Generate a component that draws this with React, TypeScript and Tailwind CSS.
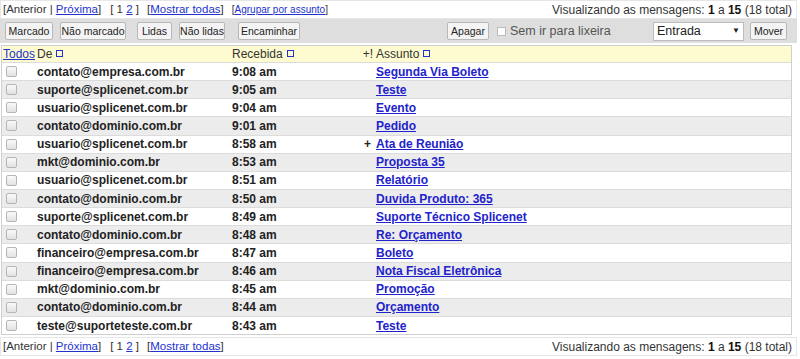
import React from 'react';

const rows = [
  { de: 'contato@empresa.com.br', hora: '9:08 am', assunto: 'Segunda Via Boleto' },
  { de: 'suporte@splicenet.com.br', hora: '9:05 am', assunto: 'Teste' },
  { de: 'usuario@splicenet.com.br', hora: '9:04 am', assunto: 'Evento' },
  { de: 'contato@dominio.com.br', hora: '9:01 am', assunto: 'Pedido' },
  { de: 'usuario@splicenet.com.br', hora: '8:58 am', assunto: 'Ata de Reunião', flag: '+' },
  { de: 'mkt@dominio.com.br', hora: '8:53 am', assunto: 'Proposta 35' },
  { de: 'usuario@splicenet.com.br', hora: '8:51 am', assunto: 'Relatório' },
  { de: 'contato@dominio.com.br', hora: '8:50 am', assunto: 'Duvida Produto: 365' },
  { de: 'suporte@splicenet.com.br', hora: '8:49 am', assunto: 'Suporte Técnico Splicenet' },
  { de: 'contato@dominio.com.br', hora: '8:48 am', assunto: 'Re: Orçamento' },
  { de: 'financeiro@empresa.com.br', hora: '8:47 am', assunto: 'Boleto' },
  { de: 'financeiro@empresa.com.br', hora: '8:46 am', assunto: 'Nota Fiscal Eletrônica' },
  { de: 'mkt@dominio.com.br', hora: '8:45 am', assunto: 'Promoção' },
  { de: 'contato@dominio.com.br', hora: '8:44 am', assunto: 'Orçamento' },
  { de: 'teste@suporteteste.com.br', hora: '8:43 am', assunto: 'Teste' },
];

// quadradinho azul de ordenação
function SortIcon() {
  return <span className="inline-block w-[7px] h-[7px] border border-[#2233cc] ml-[4px] align-middle relative top-[-1px]" />;
}

function Nav({ grupo }: { grupo?: boolean }) {
  return (
    <div className="w-[797px] h-[19px] border border-[#e6e6e6] flex items-center justify-between px-[2px] text-[12px] text-[#333]">
      <div className="flex items-center whitespace-nowrap text-[11.5px]">
        <span>[Anterior | <a className="text-[#2233cc] underline">Próxima</a>]</span>
        <span className="ml-[9px]">[ 1 <a className="text-[#2233cc] underline">2</a> ]</span>
        <span className="ml-[8px]">[<a className="text-[#2233cc] underline">Mostrar todas</a>]</span>
        {grupo && (
          <span className="ml-[8px] text-[10px]">[<a className="text-[#2233cc] underline">Agrupar por assunto</a>]</span>
        )}
      </div>
      <div className="whitespace-nowrap pr-[2px]">
        Visualizando as mensagens: <b className="text-[#111]">1</b> a <b className="text-[#111]">15</b> (18 total)
      </div>
    </div>
  );
}

function Btn({ children, className = '' }: { children: React.ReactNode; className?: string }) {
  return (
    <button className={`shrink-0 whitespace-nowrap h-[18px] flex items-center justify-center text-[10.5px] text-[#222] bg-[#f4f4f4] border border-[#b8b8b8] rounded-[2px] leading-none ${className}`}>
      {children}
    </button>
  );
}

export default function App() {
  return (
    <div className="w-[800px] h-[359px] bg-white font-['Liberation_Sans',Arial,sans-serif] overflow-hidden">
      <Nav grupo />

      {/* barra de ações */}
      <div className="w-[797px] h-[24px] bg-[#dedede] flex items-center pl-[5px] pr-[10px] whitespace-nowrap">
        <Btn className="w-[48px]">Marcado</Btn>
        <Btn className="w-[66px] ml-[7px]">Não marcado</Btn>
        <Btn className="w-[35px] ml-[11px]">Lidas</Btn>
        <Btn className="w-[46px] ml-[7px]">Não lidas</Btn>
        <Btn className="w-[62px] ml-[13px]">Encaminhar</Btn>
        <Btn className="w-[42px] ml-[147px]">Apagar</Btn>
        <span className="ml-[8px] shrink-0 inline-block w-[9px] h-[9px] border border-[#bbb] bg-white" />
        <span className="ml-[4px] text-[12.5px] text-[#555]">Sem ir para lixeira</span>
        <div className="ml-auto shrink-0 w-[91px] h-[19px] bg-white border border-[#bbb] flex items-center justify-between px-[3px] text-[12.5px] text-[#222]">
          <span>Entrada</span>
          <span className="text-[8px]">▼</span>
        </div>
        <Btn className="w-[37px] ml-[6px]">Mover</Btn>
      </div>

      {/* tabela */}
      <div className="mt-[2px] ml-[1px] w-[791px] border border-[#cfcfcf]">
        <div className="h-[16px] bg-[#fffbd0] flex items-center text-[12px] text-[#333] whitespace-nowrap">
          <span className="w-[35px] pl-[1px]">
            <a className="text-[12px] text-[#2233cc] underline">Todos</a>
          </span>
          <span className="w-[195px]">De<SortIcon /></span>
          <span className="w-[127px]">Recebida<SortIcon /></span>
          <span className="w-[17px] text-right pr-[3px]">+!</span>
          <span>Assunto<SortIcon /></span>
        </div>
        {rows.map((r, i) => (
          <div
            key={i}
            className={`h-[18.15px] flex items-center text-[12px] font-bold text-[#222] border-t border-[#dcdcdc] ${i % 2 ? 'bg-[#ececec]' : 'bg-white'}`}
          >
            <span className="w-[35px] pl-[4px]">
              <span className="block w-[11px] h-[11px] rounded-[2px] border border-[#b5b5b5] bg-gradient-to-b from-[#fafafa] to-[#e2e2e2]" />
            </span>
            <span className="w-[195px] whitespace-nowrap">{r.de}</span>
            <span className="w-[127px]">{r.hora}</span>
            <span className="w-[17px] text-center">{r.flag ?? ''}</span>
            <a className="text-[#2222cc] underline whitespace-nowrap">{r.assunto}</a>
          </div>
        ))}
      </div>

      <div className="mt-[2px]">
        <Nav />
      </div>
    </div>
  );
}
